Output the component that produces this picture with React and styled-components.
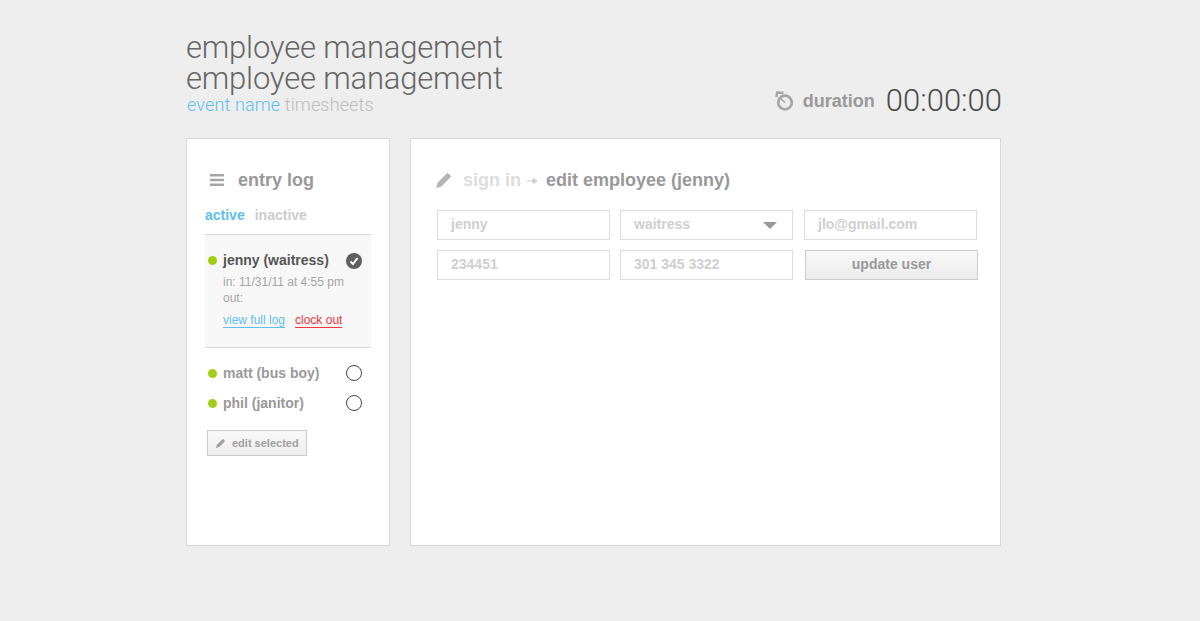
import React from 'react';
import styled, { createGlobalStyle } from 'styled-components';

const GlobalStyle = createGlobalStyle`
  html, body {
    margin: 0;
    background: #eeeeee;
    font-family: "Liberation Sans", Arial, sans-serif;
  }
`;

const Page = styled.div`
  width: 816px;
  height: 621px;
  margin-left: 186px;
`;

const Header = styled.header`
  display: flex;
  justify-content: space-between;
  align-items: flex-end;
  height: 138px;
`;

const TitleBlock = styled.div`
  display: flex;
  flex-direction: column;
  margin-bottom: 22px;
`;

const Title = styled.h1`
  margin: 0;
  font-family: Roboto, sans-serif;
  font-weight: 300;
  font-size: 31px;
  letter-spacing: -0.2px;
  line-height: 31px;
  color: #666666;
`;

const Subtitle = styled.div`
  margin: 0 0 0 1px;
  font-family: Roboto, sans-serif;
  font-weight: 300;
  font-size: 18px;
  letter-spacing: 0.13px;
  line-height: 21px;
  color: #bdbdbd;
  height: 22px;
  span {
    color: #62bdee;
  }
`;

const Timer = styled.div`
  display: flex;
  align-items: center;
  margin-bottom: 20px;
`;

const TimerLabel = styled.span`
  margin-left: 8px;
  font-size: 18px;
  font-weight: 700;
  color: #999999;
`;

const TimerValue = styled.span`
  margin-left: 11px;
  font-family: Roboto, sans-serif;
  font-weight: 300;
  font-size: 31px;
  line-height: 34px;
  color: #4a4a4a;
`;

const Columns = styled.div`
  display: flex;
  gap: 20px;
  height: 408px;
`;

const Panel = styled.section`
  box-sizing: border-box;
  background: #ffffff;
  border: 1px solid #d8d8d8;
  height: 100%;
`;

const Sidebar = styled(Panel)`
  width: 204px;
  padding: 29px 18px 0;
`;

const Content = styled(Panel)`
  width: 591px;
  padding: 29px 22px 0 26px;
`;

const PanelHeading = styled.div`
  display: flex;
  align-items: center;
  height: 24px;
  font-size: 18px;
  font-weight: 700;
  color: #999999;
`;

const SidebarHeading = styled(PanelHeading)`
  padding-left: 5px;
  gap: 14px;
`;

const MenuIcon = styled.svg`
  width: 14px;
  height: 12px;
  flex: none;
`;

const Tabs = styled.div`
  display: flex;
  gap: 10px;
  margin-top: 15px;
  font-size: 14px;
  font-weight: 700;
  line-height: 17px;
  height: 22px;
`;

const Tab = styled.span`
  color: ${(p) => (p.$active ? '#62bdee' : '#cccccc')};
`;

const EntryList = styled.div`
  border-top: 1px solid #d8d8d8;
  margin-top: 5px;
`;

const SelectedEntry = styled.div`
  background: #f7f7f7;
  border-bottom: 1px solid #d8d8d8;
  height: 113px;
  box-sizing: border-box;
  padding: 14px 0 0 3px;
  margin-bottom: 14px;
`;

const EntryRow = styled.div`
  display: flex;
  align-items: center;
  height: 22px;
  padding-left: ${(p) => (p.$plain ? '3px' : '0')};
  margin-bottom: ${(p) => (p.$plain ? '8px' : '0')};
`;

const Dot = styled.span`
  width: 9px;
  height: 9px;
  border-radius: 50%;
  background: #a3cd17;
  flex: none;
`;

const EntryName = styled.span`
  flex: 1;
  margin-left: 6px;
  font-size: 14px;
  font-weight: 700;
  color: ${(p) => (p.$selected ? '#555555' : '#999999')};
`;

const Radio = styled.span`
  width: 16px;
  height: 16px;
  box-sizing: border-box;
  border: 1px solid #444444;
  border-radius: 50%;
  margin-right: 9px;
  flex: none;
`;

const CheckBadge = styled.svg`
  width: 16px;
  height: 16px;
  margin: 2px 9px 0 0;
  flex: none;
`;

const EntryMeta = styled.div`
  margin: 3px 0 0 15px;
  font-size: 12px;
  line-height: 16px;
  color: #a6a6a6;
`;

const EntryLinks = styled.div`
  display: flex;
  gap: 10px;
  margin: 7px 0 0 15px;
  font-size: 12px;
  line-height: 14px;
`;

const EntryLink = styled.a`
  color: ${(p) => p.$color};
  border-bottom: 1px solid ${(p) => p.$color};
`;

const EditButton = styled.button`
  display: flex;
  align-items: center;
  gap: 7px;
  width: 100px;
  height: 26px;
  margin: 16px 0 0 2px;
  padding: 0 0 0 8px;
  box-sizing: border-box;
  border: 1px solid #cccccc;
  background: linear-gradient(#f8f8f8, #eeeeee);
  font-family: inherit;
  font-size: 11px;
  font-weight: 700;
  white-space: nowrap;
  color: #a0a0a0;
`;

const MainHeading = styled(PanelHeading)`
  gap: 12px;
  margin-left: -1px;
`;

const Crumbs = styled.span`
  display: flex;
  align-items: center;
  color: #dddddd;
  b {
    color: #999999;
  }
`;

const CrumbArrow = styled.svg`
  width: 11px;
  height: 8px;
  margin: 1px 8px 0 6px;
`;

const FormGrid = styled.div`
  display: grid;
  grid-template-columns: 173px 173px 175px;
  grid-auto-rows: 30px;
  column-gap: 10px;
  row-gap: 10px;
  margin-top: 18px;
`;

const Field = styled.div`
  display: flex;
  align-items: center;
  justify-content: space-between;
  box-sizing: border-box;
  border: 1px solid #dddddd;
  padding: 0 15px 2px 13px;
  margin: ${(p) => (p.$shifted ? '0 1px' : '0')};
  font-size: 14px;
  font-weight: 700;
  line-height: 14px;
  color: #cfcfcf;
`;

const Caret = styled.span`
  width: 0;
  height: 0;
  margin-top: 2px;
  border-left: 7px solid transparent;
  border-right: 7px solid transparent;
  border-top: 7px solid #999999;
`;

const UpdateButton = styled.button`
  box-sizing: border-box;
  margin-left: 2px;
  padding: 0 6px 2px;
  border: 1px solid #cccccc;
  background: linear-gradient(#f8f8f8, #ececec);
  font-family: inherit;
  font-size: 14px;
  font-weight: 700;
  color: #999999;
`;

const Pencil = ({ size, color }) => (
  <svg width={size} height={size} viewBox="1 1 14 14">
    <path d="M11.5 1 C12.5 1 15 3.5 15 4.5 L6 13.5 L1 15 L2.5 10 Z" fill={color} />
  </svg>
);

const Stopwatch = () => (
  <svg width="20" height="20" viewBox="0 0 20 20" fill="none" stroke="#a6a6a6">
    <circle cx="10" cy="11.5" r="6.8" strokeWidth="2.8" />
    <path d="M1.5 6 L2 1.5 L8.5 2" strokeWidth="2.4" />
    <path d="M5.5 7.5 L10 11.5" strokeWidth="1.6" />
  </svg>
);

const App = () => (
  <Page>
    <GlobalStyle />
    <Header>
      <TitleBlock>
        <Title>employee management</Title>
        <Title>employee management</Title>
        <Subtitle><span>event name</span> timesheets</Subtitle>
      </TitleBlock>
      <Timer>
        <Stopwatch />
        <TimerLabel>duration</TimerLabel>
        <TimerValue>00:00:00</TimerValue>
      </Timer>
    </Header>
    <Columns>
      <Sidebar>
        <SidebarHeading>
          <MenuIcon viewBox="0 0 14 12">
            <path d="M0 0h14v2.4H0zM0 4.8h14v2.4H0zM0 9.6h14v2.4H0z" fill="#a6a6a6" />
          </MenuIcon>
          entry log
        </SidebarHeading>
        <Tabs>
          <Tab $active>active</Tab>
          <Tab>inactive</Tab>
        </Tabs>
        <EntryList>
          <SelectedEntry>
            <EntryRow>
              <Dot />
              <EntryName $selected>jenny (waitress)</EntryName>
              <CheckBadge viewBox="0 0 16 16">
                <circle cx="8" cy="8" r="8" fill="#5f5f5f" />
                <path d="M4.5 8.5 L7 11 L11.5 5" fill="none" stroke="#ffffff" strokeWidth="2" />
              </CheckBadge>
            </EntryRow>
            <EntryMeta>in: 11/31/11 at 4:55 pm<br />out:</EntryMeta>
            <EntryLinks>
              <EntryLink $color="#62bdee">view full log</EntryLink>
              <EntryLink $color="#f0353f">clock out</EntryLink>
            </EntryLinks>
          </SelectedEntry>
          <EntryRow $plain><Dot /><EntryName>matt (bus boy)</EntryName><Radio /></EntryRow>
          <EntryRow $plain><Dot /><EntryName>phil (janitor)</EntryName><Radio /></EntryRow>
        </EntryList>
        <EditButton><Pencil size={9} color="#a0a0a0" />edit selected</EditButton>
      </Sidebar>
      <Content>
        <MainHeading>
          <Pencil size={15} color="#b5b5b5" />
          <Crumbs>
            sign in
            <CrumbArrow viewBox="0 0 11 8">
              <path d="M0 4h7M6 1.5 L10 4 L6 6.5 Z" fill="#cccccc" stroke="#cccccc" />
            </CrumbArrow>
            <b>edit employee (jenny)</b>
          </Crumbs>
        </MainHeading>
        <FormGrid>
          <Field>jenny</Field>
          <Field>waitress<Caret /></Field>
          <Field $shifted>jlo@gmail.com</Field>
          <Field>234451</Field>
          <Field>301 345 3322</Field>
          <UpdateButton>update user</UpdateButton>
        </FormGrid>
      </Content>
    </Columns>
  </Page>
);

export default App;
